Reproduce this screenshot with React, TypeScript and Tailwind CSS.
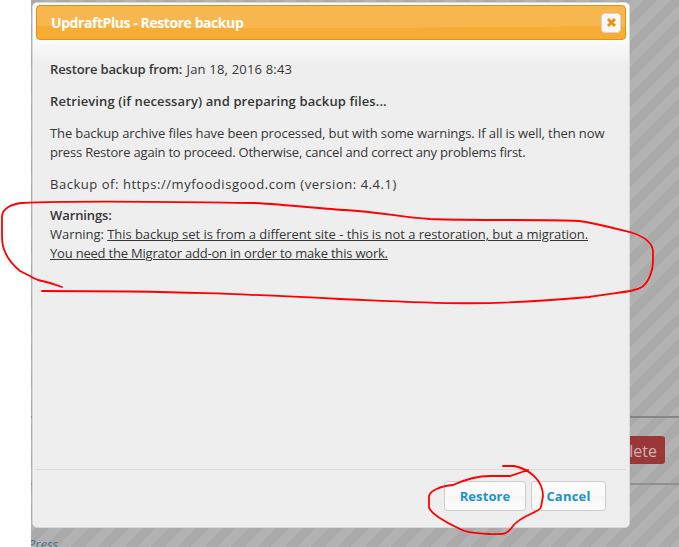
import React from "react";

function Line({ className = "", children }: { className?: string; children: React.ReactNode }) {
  return <div className={"h-[19px] whitespace-nowrap leading-[19px] " + className}>{children}</div>;
}

export default function App() {
  return (
    <div className="relative h-[547px] w-[679px] overflow-hidden bg-white pl-[31px] font-['Open_Sans',sans-serif] text-[13px] text-[#363636]">
      <div className="relative h-[547px] w-[648px] overflow-hidden bg-[repeating-linear-gradient(135deg,#aaaaaa_0px,#aaaaaa_9.43px,#b2b2b2_9.43px,#b2b2b2_18.86px)] pl-px pt-[2px]">
        <div className="absolute left-0 top-[416px] h-[2px] w-full bg-[#858585]" />
        <div className="absolute left-0 top-[483px] h-[2px] w-full bg-[#909090]" />
        <div className="absolute right-[14px] top-[436px] flex h-[28px] w-[70px] items-center justify-end rounded-[3px] bg-[#9c3738] pr-2 pt-[2px] text-[16px] text-[#c9b4b4]">Delete</div>
        <div className="absolute -left-[3px] top-[535px] text-[13px] italic leading-[18px] text-[#457391]">Press</div>
        <div className="relative flex h-[526px] w-[598px] flex-col rounded-[5px] border border-[#d8d8d8] bg-[#eeeeee] bg-[linear-gradient(#ffffff_0px,#ffffff_30px,#eeeeee_62px)] px-[3px] pt-[2px]">
          <div className="flex h-[35px] shrink-0 items-center justify-between rounded-[4px] border border-[#e78f08] bg-[#f7ad33] bg-[radial-gradient(ellipse_900px_40px_at_50%_-18px,#f8b64e_99%,transparent_100%)] pl-[14px] pr-1 text-white">
            <span className="text-[14px] font-bold tracking-[-0.43px]">UpdraftPlus - Restore backup</span>
            <span className="flex size-5 items-center justify-center rounded-[4px] border border-[#d4d4d4] bg-[#f8f8f8]">
              <svg width="9" height="9" viewBox="0 0 9 9" stroke="#ef8c08" strokeWidth="2.8"><path d="M1 1 8 8M8 1 1 8" /></svg>
            </span>
          </div>
          <div className="flex h-[429px] flex-col pl-[14px] pt-5">
            <Line><b className="font-semibold tracking-[-0.15px]">Restore backup from:</b> <span className="ml-px tracking-[0.18px]">Jan 18, 2016 8:43</span></Line>
            <Line className="mt-[13px] font-semibold tracking-[0.11px]">Retrieving (if necessary) and preparing backup files...</Line>
            <Line className="mt-[13px] tracking-[-0.11px]">The backup archive files have been processed, but with some warnings. If all is well, then now</Line>
            <Line className="tracking-[-0.2px]">press Restore again to proceed. Otherwise, cancel and correct any problems first.</Line>
            <Line className="mt-[13px] tracking-[0.54px]">Backup of: https://myfoodisgood.com (version: 4.4.1)</Line>
            <Line className="mt-3 font-semibold tracking-[-0.1px]">Warnings:</Line>
            <Line className="tracking-[-0.05px]">Warning: <u>This backup set is from a different site - this is not a restoration, but a migration.</u></Line>
            <Line className="tracking-[-0.2px]"><u>You need the Migrator add-on in order to make this work.</u></Line>
          </div>
          <div className="flex h-[55px] justify-end gap-[5px] border-t border-[#dadada] pr-5 pt-[11px] font-bold text-[#1c94c4]">
            <div className="flex h-[30px] w-[82px] items-center justify-center rounded-[3px] border border-[#cccccc] bg-[linear-gradient(#fbfbfb_50%,#f6f6f6_50%,#fcfcfc)] pt-px tracking-[0.1px]">Restore</div>
            <div className="flex h-[30px] w-[75px] items-center justify-center rounded-[3px] border border-[#cccccc] bg-[linear-gradient(#fbfbfb_50%,#f6f6f6_50%,#fcfcfc)] pt-px tracking-[0.2px]">Cancel</div>
          </div>
        </div>
      </div>
      <svg className="pointer-events-none absolute left-0 top-0" width="679" height="547" fill="none" stroke="#ff0000" strokeWidth="1.8" strokeLinecap="round">
        <path d="M62 287C54 284 48 282 38 280Q33 278 30 276L20 271C9 262 2 251 2 237V217C2 208 12 204 22 203C80 200 180 202 255 203C290 205 325 209 345 210C380 212 400 217 430 219C480 221 550 219 579 221Q588 222 609 227L630 232C646 237 653 243 653 252V262C653 270 649 282 642 287C634 292 620 292 589 297C480 307 430 303 340 299C240 294 180 291 42 291" />
        <path d="M503 466H514C529 469 543 480 543 496L541 507C541 512 521 515 513 526C506 536 502 534 490 534C470 533 465 532 458 528C445 522 430 513 429 507V496C430 491 440 486 453 485C464 480 476 476 490 476H510L528 470" />
      </svg>
    </div>
  );
}
